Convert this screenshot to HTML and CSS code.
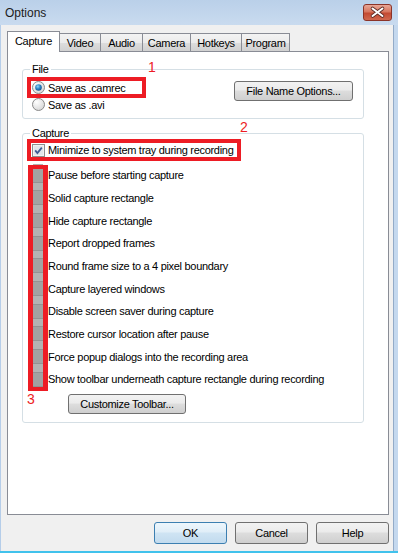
FILE: index.html
```html
<!DOCTYPE html>
<html>
<head>
	<title>Options</title>
	<meta charset="utf-8">
	<link rel="stylesheet" href="styles.css">
</head>
<body>
	<div class="window">
		<div class="titlebar">
			<span class="title">Options</span>
			<button class="close">
				<svg width="27" height="15" viewBox="0 0 27 15">
					<path d="M8.5 3.5 L18.5 11 M18.5 3.5 L8.5 11" stroke="#5b2b25" stroke-width="3.6" stroke-linecap="round" fill="none"/>
					<path d="M8.5 3.5 L18.5 11 M18.5 3.5 L8.5 11" stroke="#fff" stroke-width="2" stroke-linecap="round" fill="none"/>
				</svg>
			</button>
		</div>
		<div class="body">
			<div class="tabs">
				<div class="tab active w-capture">Capture</div>
				<div class="tab w-video">Video</div>
				<div class="tab w-audio">Audio</div>
				<div class="tab w-camera">Camera</div>
				<div class="tab w-hotkeys">Hotkeys</div>
				<div class="tab w-program">Program</div>
			</div>
			<div class="panel">
				<span class="note note-1">1</span>
				<span class="note note-2">2</span>
				<span class="note note-3">3</span>

				<fieldset class="group">
					<legend>File</legend>
					<div class="file-row">
						<div class="radios">
							<label class="radio-row marked">
								<svg class="radio" width="13" height="13" viewBox="0 0 13 13">
									<defs>
										<radialGradient id="rbg" cx="0.35" cy="0.3" r="0.8">
											<stop offset="0" stop-color="#ffffff"/>
											<stop offset="1" stop-color="#d4d4d4"/>
										</radialGradient>
										<radialGradient id="rdot" cx="0.4" cy="0.35" r="0.7">
											<stop offset="0" stop-color="#8fd6f8"/>
											<stop offset="0.5" stop-color="#2b86c8"/>
											<stop offset="1" stop-color="#174e86"/>
										</radialGradient>
									</defs>
									<circle cx="6.5" cy="6.5" r="6" fill="url(#rbg)" stroke="#8a8a8a"/>
									<circle cx="6.5" cy="6.5" r="3.3" fill="url(#rdot)"/>
								</svg>
								Save as .camrec
							</label>
							<label class="radio-row">
								<svg class="radio" width="13" height="13" viewBox="0 0 13 13">
									<circle cx="6.5" cy="6.5" r="6" fill="url(#rbg)" stroke="#8a8a8a"/>
								</svg>
								Save as .avi
							</label>
						</div>
						<button class="btn btn-file">File Name Options...</button>
					</div>
				</fieldset>

				<fieldset class="group group-capture">
					<legend>Capture</legend>
					<label class="check-row marked">
						<svg class="check" width="13" height="13" viewBox="0 0 13 13">
							<rect x="0.5" y="0.5" width="12" height="12" fill="#f2f2f2" stroke="#8e8f8f"/>
							<rect x="2" y="2" width="9" height="9" fill="#e2e6ea"/>
							<path d="M3.2 6.4 L5.4 9 L9.8 3.6" fill="none" stroke="#3f5a94" stroke-width="1.8"/>
						</svg>
						Minimize to system tray during recording
					</label>

					<div class="checklist">
						<div class="item"><span class="box"></span>Pause before starting capture</div>
						<div class="item"><span class="box"></span>Solid capture rectangle</div>
						<div class="item"><span class="box"></span>Hide capture rectangle</div>
						<div class="item"><span class="box"></span>Report dropped frames</div>
						<div class="item"><span class="box"></span>Round frame size to a 4 pixel boundary</div>
						<div class="item"><span class="box"></span>Capture layered windows</div>
						<div class="item"><span class="box"></span>Disable screen saver during capture</div>
						<div class="item"><span class="box"></span>Restore cursor location after pause</div>
						<div class="item"><span class="box"></span>Force popup dialogs into the recording area</div>
						<div class="item"><span class="box"></span>Show toolbar underneath capture rectangle during recording</div>
						<div class="frame3"></div>
					</div>

					<div class="toolbar-row">
						<button class="btn btn-toolbar">Customize Toolbar...</button>
					</div>
				</fieldset>
			</div>
			<div class="actions">
				<button class="btn btn-dialog btn-default">OK</button>
				<button class="btn btn-dialog">Cancel</button>
				<button class="btn btn-dialog">Help</button>
			</div>
		</div>
	</div>
</body>
</html>
```

FILE: styles.css
```css
* {
	box-sizing: border-box;
}

body {
	margin: 0;
	font-family: "Liberation Sans", Arial, sans-serif;
	font-size: 11px;
	letter-spacing: -0.3px;
	color: #000;
}

.window {
	width: 398px;
	height: 553px;
	display: flex;
	flex-direction: column;
	background: #c4d8ee;
	border-bottom: 2px solid #41c2ec;
	overflow: hidden;
}

/* title bar */
.titlebar {
	height: 25px;
	flex: none;
	display: flex;
	justify-content: space-between;
	align-items: flex-start;
	padding: 4px 6px 0 5px;
	background: linear-gradient(#bad0e9, #c9dbef);
}

.title {
	font-size: 12px;
	letter-spacing: 0;
	line-height: 17px;
	margin-top: 1px;
	color: #1b1b1b;
}

.close {
	width: 29px;
	height: 17px;
	padding: 0;
	border: 1px solid #8b3328;
	border-radius: 3px;
	background: linear-gradient(#e8a797, #d7765f 45%, #c34a32 55%, #d0684f);
	display: flex;
	align-items: center;
	justify-content: center;
}

.close svg {
	display: block;
}

/* window body */
.body {
	flex: 1;
	background: #f0f0f0;
	border-left: 1px solid #b5cde9;
	border-right: 1px solid #93abc8;
	margin-right: 4px;
	padding: 6px 0 0 6px;
}

.tabs {
	display: flex;
	align-items: flex-end;
	height: 21px;
	margin-bottom: -1px;
}

.tab {
	height: 19px;
	margin-left: -1px;
	border: 1px solid #898c95;
	border-bottom: 0;
	background: linear-gradient(#f3f3f3, #ebebeb 50%, #dddddd 50%, #cfcfcf);
	text-align: center;
	line-height: 18px;
}

.tab.active {
	position: relative;
	z-index: 1;
	height: 21px;
	margin-left: 0;
	background: #fff;
	line-height: 19px;
}

.w-capture { width: 53px; }
.w-video { width: 42px; }
.w-audio { width: 43px; }
.w-camera { width: 49px; }
.w-hotkeys { width: 52px; }
.w-program { width: 49px; }

.panel {
	position: relative;
	width: 382px;
	height: 464px;
	border: 1px solid #898c95;
	background: #fff;
	padding: 11px 24px 0 14px;
}

/* red annotations */
.note {
	position: absolute;
	font-size: 14px;
	line-height: 14px;
	letter-spacing: 0;
	color: #ed1c24;
	z-index: 2;
}

.note-1 { left: 140px; top: 8px; }
.note-2 { left: 232px; top: 68px; }
.note-3 { left: 19px; top: 340px; }

.marked {
	outline: 4px solid #ed1c24;
}

/* group boxes */
.group {
	margin: 0;
	min-width: 0;
	padding: 5px 10px 7px 5px;
	border: 1px solid #d5dfe5;
	border-radius: 3px;
}

.group legend {
	margin-left: 2px;
	padding: 0 2px;
	line-height: 13px;
}

.group-capture {
	margin-top: 8px;
	padding-top: 3px;
	padding-bottom: 8px;
}

.file-row {
	display: flex;
	justify-content: space-between;
	align-items: flex-start;
}

.radios {
	display: flex;
	flex-direction: column;
	gap: 4px;
}

.radio-row,
.check-row {
	display: flex;
	align-items: center;
	gap: 3px;
	height: 13px;
	margin-left: 3px;
	padding-left: 1px;
}

.radio-row.marked {
	width: 111px;
}

.radio,
.check {
	display: block;
	flex: none;
}

.check-row {
	height: 14px;
	width: 206px;
}

/* disabled options */
.checklist {
	position: relative;
	margin-top: 7px;
}

.item {
	height: 22.67px;
	display: flex;
	align-items: center;
	gap: 5px;
	padding-left: 5px;
}

.box {
	width: 10px;
	align-self: stretch;
	background: #b3b3b3;
	display: flex;
	align-items: center;
}

.box::before {
	content: "";
	width: 10px;
	height: 13px;
	background: #a2a2a2;
	border-top: 1px solid #939393;
	border-bottom: 1px solid #939393;
}

.frame3 {
	position: absolute;
	left: 0;
	top: 1px;
	width: 20px;
	height: 226px;
	border: 4px solid #ed1c24;
	border-left-width: 5px;
	border-right-width: 5px;
}

.toolbar-row {
	display: flex;
	margin-top: 3px;
}

/* buttons */
.btn {
	font: inherit;
	letter-spacing: inherit;
	color: #000;
	height: 20px;
	padding: 0;
	border: 1px solid #707070;
	border-radius: 3px;
	background: linear-gradient(#f2f2f2, #ebebeb 45%, #dddddd 50%, #cfcfcf);
}

.btn-file {
	width: 119px;
}

.btn-toolbar {
	width: 118px;
	margin-left: 40px;
}

.actions {
	display: flex;
	justify-content: flex-end;
	gap: 8px;
	width: 382px;
	margin-top: 7px;
}

.btn-dialog {
	width: 73px;
	height: 22px;
}

.btn-default {
	border-color: #3c7fb1;
	background: linear-gradient(#edf6fc, #e0eef8 45%, #cfe4f3 50%, #c2dbee);
}
```
